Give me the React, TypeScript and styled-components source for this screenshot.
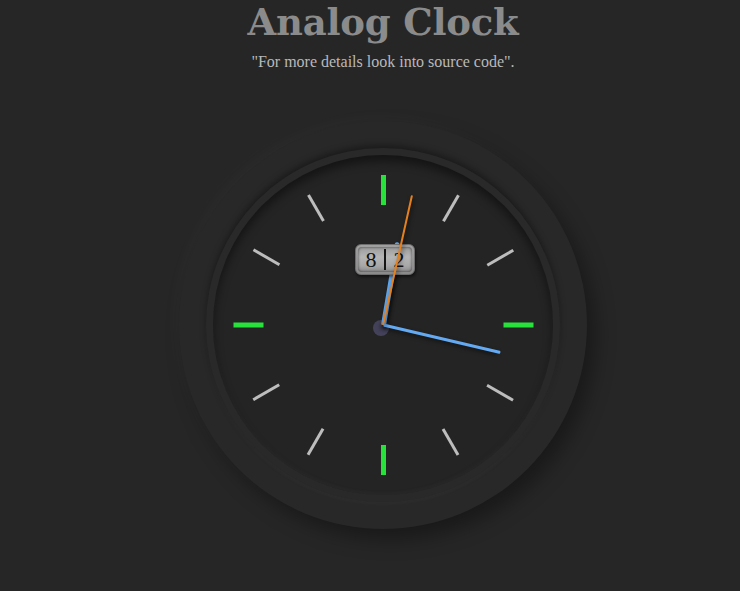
import React from "react";
import styled, { createGlobalStyle } from "styled-components";

const Global = createGlobalStyle`
  html, body { margin: 0; padding: 0; background: #262626; }
  body { font-family: "Liberation Serif", serif; }
`;

const Page = styled.main`
  display: flex;
  flex-direction: column;
  align-items: center;
  padding-left: 26px;
  height: 591px;
  box-sizing: border-box;
  overflow: hidden;
`;

const Title = styled.h1`
  margin: 0;
  font-family: "DejaVu Serif", serif;
  font-weight: bold;
  font-size: 37px;
  line-height: 44px;
  color: #8b8b8b;
  letter-spacing: -0.2px;
`;

const Subtitle = styled.p`
  margin: 9px 0 0;
  font-family: "Liberation Serif", serif;
  font-size: 16px;
  line-height: 18px;
  color: #b9b9b9;
`;

const Outer = styled.div`
  margin-top: 50px;
  width: 408px;
  height: 408px;
  border-radius: 50%;
  background: #282828;
  box-shadow: -6px -6px 14px rgba(255, 255, 255, 0.025),
    8px 10px 20px rgba(0, 0, 0, 0.35);
  display: flex;
  align-items: center;
  justify-content: center;
`;

const Ring = styled.div`
  width: 354px;
  height: 354px;
  border-radius: 50%;
  background: #292929;
  box-shadow: 0 -3px 6px rgba(0, 0, 0, 0.35), 0 3px 4px rgba(255, 255, 255, 0.03);
  display: flex;
  align-items: center;
  justify-content: center;
`;

const Face = styled.div`
  position: relative;
  width: 340px;
  height: 340px;
  border-radius: 50%;
  background: #242424;
  box-shadow: inset 0 6px 10px rgba(0, 0, 0, 0.45),
    inset 0 -2px 4px rgba(255, 255, 255, 0.03);
`;

const Tick = styled.div<{ $major: boolean }>`
  position: absolute;
  left: 50%;
  bottom: 50%;
  width: ${(p) => (p.$major ? 5 : 2.5)}px;
  height: 30px;
  margin-left: ${(p) => (p.$major ? -2.5 : -1.25)}px;
  background: ${(p) => (p.$major ? "#27e23a" : "#bdbdbd")};
  transform-origin: 50% 150px;
  margin-bottom: 120px;
`;

const Hand = styled.div<{ $len: number; $w: number; $color: string; $round?: boolean }>`
  position: absolute;
  left: 50%;
  bottom: 50%;
  width: ${(p) => p.$w}px;
  height: ${(p) => p.$len}px;
  margin-left: ${(p) => -p.$w / 2}px;
  background: ${(p) => p.$color};
  border-radius: ${(p) => (p.$round ? `${p.$w}px ${p.$w}px 1px 1px` : "1px")};
  transform-origin: 50% 100%;
  box-shadow: 2px 3px 4px rgba(0, 0, 0, 0.55);
`;

const Pin = styled.div`
  position: absolute;
  left: 50%;
  top: 50%;
  width: 16px;
  height: 16px;
  margin: -5px 0 0 -10px;
  border-radius: 50%;
  background: #474660;
  opacity: 0.9;
`;

const DateBox = styled.div`
  position: absolute;
  left: 142px;
  top: 89px;
  width: 60px;
  height: 31px;
  box-sizing: border-box;
  padding: 2px;
  border: 1px solid #6e6e6e;
  border-radius: 6px;
  background: linear-gradient(#a0a0a0, #8a8a8a);
  box-shadow: 1px 2px 3px rgba(0, 0, 0, 0.5);
  display: flex;
`;

const DateWindow = styled.div`
  flex: 1;
  display: flex;
  align-items: center;
  border-radius: 4px;
  background: linear-gradient(#9c9c9c, #b6b6b6 40%, #a8a8a8 75%, #8c8c8c);
  box-shadow: inset 0 0 3px rgba(0, 0, 0, 0.6);
`;

const Digit = styled.span`
  flex: 1;
  text-align: center;
  font-family: "Liberation Serif", serif;
  font-size: 22px;
  line-height: 22px;
  color: #111;
  padding-top: 1px;
`;

const Sep = styled.span`
  width: 2px;
  height: 21px;
  background: #151515;
`;

const H = 12,
  M = 17,
  S = 2;

export default function App() {
  const sDeg = S * 6 + 0.6;
  const mDeg = M * 6 + 1.2;
  const hDeg = (H % 12) * 30 + M * 0.5 + 1.1;
  return (
    <Page>
      <Global />
      <Title>Analog Clock</Title>
      <Subtitle>"For more details look into source code".</Subtitle>
      <Outer>
        <Ring>
          <Face>
            {Array.from({ length: 12 }, (_, i) => (
              <Tick key={i} $major={i % 3 === 0} style={{ transform: `rotate(${i * 30}deg)` }} />
            ))}
            <Pin />
            <Hand $len={84} $w={4.5} $color="#5fa6ee" $round style={{ transform: `rotate(${hDeg}deg)` }} />
            <Hand $len={120} $w={3} $color="#64aaf2" style={{ transform: `rotate(${mDeg}deg)` }} />
            <DateBox>
              <DateWindow>
                <Digit>8</Digit>
                <Sep />
                <Digit>2</Digit>
              </DateWindow>
            </DateBox>
            <Hand $len={133} $w={1.5} $color="#e5801f" style={{ transform: `rotate(${sDeg}deg)` }} />
          </Face>
        </Ring>
      </Outer>
    </Page>
  );
}
